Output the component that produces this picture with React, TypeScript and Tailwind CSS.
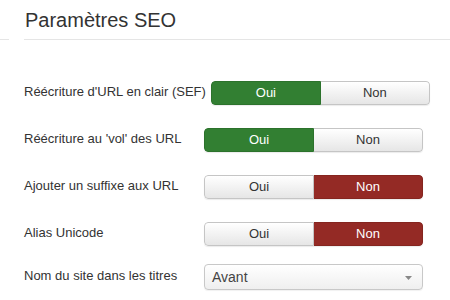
const YesNo = ({ value }: { value: "oui" | "non" }) => {
  const base = "flex items-center justify-center h-full text-[13px] leading-[18px]";
  const off = "bg-gradient-to-b from-white to-[#e6e6e6] text-[#333] border-[#c5c5c5]";
  return (
    <div className="flex w-[219px] h-[24px] rounded-[4px] overflow-hidden shadow-[0_1px_1px_rgba(0,0,0,0.08)]">
      <div
        className={`${base} w-[110px] rounded-l-[4px] border ${
          value === "oui" ? "bg-[#327f32] border-[#2c722c] text-white" : off
        }`}
      >
        Oui
      </div>
      <div
        className={`${base} flex-1 rounded-r-[4px] border border-l-0 ${
          value === "non" ? "bg-[#942a25] border-[#85251f] text-white" : off
        }`}
      >
        Non
      </div>
    </div>
  );
};

const Row = ({ label, children }: { label: string; children: React.ReactNode }) => (
  <div className="flex items-center">
    <div className="min-w-[180px] pr-[5px] -mt-[3px] text-[13px] leading-[18px] text-[#333] whitespace-nowrap">
      {label}
    </div>
    {children}
  </div>
);

export default function App() {
  return (
    <div
      className="w-[450px] h-[300px] bg-white overflow-hidden"
      style={{ fontFamily: '"Liberation Sans", Arial, sans-serif' }}
    >
      {/* Header */}
      <h2 className="pt-[8px] pl-[25px] text-[20px] leading-[24px] text-[#333]">Paramètres SEO</h2>
      <div className="flex mt-[7px]">
        <div className="w-[9px] h-px bg-[#e5e5e5]" />
        <div className="w-[15px]" />
        <div className="flex-1 h-px bg-[#e5e5e5]" />
      </div>

      {/* Form */}
      <div className="flex flex-col gap-[23px] pl-[24px] mt-[41px]">
        <Row label="Réécriture d'URL en clair (SEF)">
          <YesNo value="oui" />
        </Row>
        <Row label="Réécriture au 'vol' des URL">
          <YesNo value="oui" />
        </Row>
        <Row label="Ajouter un suffixe aux URL">
          <YesNo value="non" />
        </Row>
        <Row label="Alias Unicode">
          <YesNo value="non" />
        </Row>
        <div className="-mt-[5px]">
          <Row label="Nom du site dans les titres">
            <div className="relative flex items-center w-[219px] h-[26px] pl-[7px] rounded-[4px] border border-[#c8c8c8] bg-gradient-to-b from-white to-[#efefef] text-[14px] text-[#444] shadow-[0_1px_1px_rgba(0,0,0,0.06)]">
              Avant
              <svg className="absolute right-[10px] top-[11px]" width="7" height="4" viewBox="0 0 7 4">
                <path d="M0 0 L7 0 L3.5 4 Z" fill="#888" />
              </svg>
            </div>
          </Row>
        </div>
      </div>
    </div>
  );
}
